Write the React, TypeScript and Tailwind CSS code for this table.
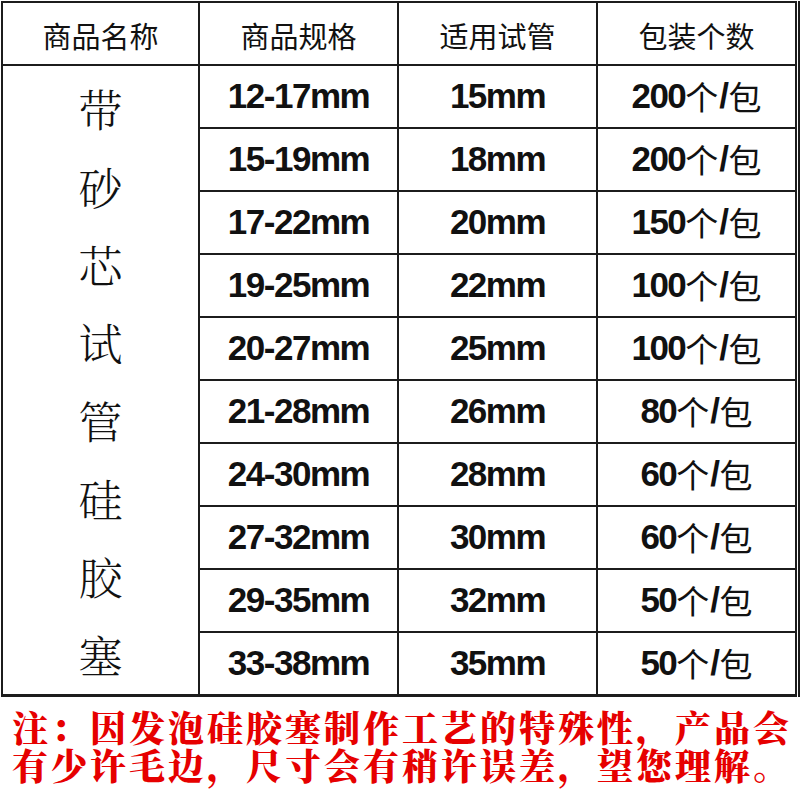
import React from 'react';

const rows = [
  ['12-17mm', '15mm', '200'],
  ['15-19mm', '18mm', '200'],
  ['17-22mm', '20mm', '150'],
  ['19-25mm', '22mm', '100'],
  ['20-27mm', '25mm', '100'],
  ['21-28mm', '26mm', '80'],
  ['24-30mm', '28mm', '60'],
  ['27-32mm', '30mm', '60'],
  ['29-35mm', '32mm', '50'],
  ['33-38mm', '35mm', '50'],
];

const headers = ['商品名称', '商品规格', '适用试管', '包装个数'];
const nameChars = ['带', '砂', '芯', '试', '管', '硅', '胶', '塞'];

const cjk = "font-['Noto_Sans_CJK_SC',sans-serif]";
const num = "font-['Liberation_Sans','Noto_Sans_CJK_SC',sans-serif] font-bold text-[35px] tracking-[-1.5px]";

export default function App() {
  return (
    <div className="w-[800px] h-[800px] bg-white overflow-hidden">
      <div className="flex pt-[1px]">
        <div className="ml-[1px] w-[796px] grid grid-cols-[195px_197px_197px_197px] grid-rows-[repeat(11,61px)] gap-[2px] p-[2px] bg-[#1c1c1c]">
          {headers.map((h) => (
            <div
              key={h}
              className={`bg-white flex items-center justify-center pt-[4px] text-[29px] text-[#111] ${cjk}`}
            >
              {h}
            </div>
          ))}

          {/* 商品名称: vertical text over all rows */}
          <div className="row-span-10 bg-white flex flex-col items-center justify-center pt-[2px]">
            {nameChars.map((c) => (
              <span
                key={c}
                className="text-[44px] leading-[78px] text-[#111] font-['Noto_Serif_CJK_SC','Noto_Sans_CJK_SC',serif] font-light"
              >
                {c}
              </span>
            ))}
          </div>

          {rows.map(([spec, tube, count]) => (
            <React.Fragment key={spec}>
              <div className={`bg-white flex items-center justify-center text-[#111] ${num}`}>{spec}</div>
              <div className={`bg-white flex items-center justify-center text-[#111] ${num}`}>{tube}</div>
              <div className={`bg-white flex items-center justify-center text-[#111] ${num}`}>
                {count}
                <span className={`font-normal text-[33px] tracking-normal ${cjk}`}>个</span>
                <span className="px-[1px]">/</span>
                <span className={`font-normal text-[33px] tracking-normal ${cjk}`}>包</span>
              </div>
            </React.Fragment>
          ))}
        </div>
        <div className="ml-[1px] w-[2px] h-[696px] bg-[#1c1c1c]" />
      </div>

      <div className="mt-[11px] pl-[12px] text-[36px] leading-[38px] tracking-[3px] text-[#e60000] font-black font-['Noto_Serif_CJK_SC','Noto_Sans_CJK_SC',serif] whitespace-nowrap">
        <p>注：因发泡硅胶塞制作工艺的特殊性，产品会</p>
        <p>有少许毛边，尺寸会有稍许误差，望您理解。</p>
      </div>
    </div>
  );
}
